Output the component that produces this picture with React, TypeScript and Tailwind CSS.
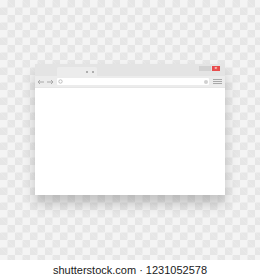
import React from 'react'

// Browser window mockup on a transparency checkerboard

export default function App() {
  return (
    <div className="w-[260px] h-[280px] flex flex-col bg-white overflow-hidden">
      <div className="h-[260px] w-full bg-[#f4f4f4] bg-[length:15px_15px] bg-[linear-gradient(45deg,#e6e6e6_25%,transparent_25%,transparent_75%,#e6e6e6_75%),linear-gradient(45deg,#e6e6e6_25%,transparent_25%,transparent_75%,#e6e6e6_75%)] bg-[position:0_0,7.5px_7.5px] pt-[64px] pl-[35px]">
        <div className="w-[190px] flex flex-col shadow-[0_9px_12px_rgba(0,0,0,0.2)]">
          {/* title bar */}
          <div className="h-[12px] bg-[#e4e4e4] flex items-end">
            <div className="ml-[22px] h-[9px] w-[40px] bg-[#ececec] rounded-t-[2px] flex items-center justify-end pr-[3px] gap-[4px]">
              <span className="w-[2px] h-[2px] bg-[#9a9a9a] rounded-full" />
              <span className="w-[2px] h-[2px] bg-[#9a9a9a] rounded-full" />
            </div>
            <div className="ml-auto mr-[5px] mb-[5px] flex items-center gap-[1px]">
              <span className="w-[12px] h-[5px] bg-[#d2d2d2]" />
              <span className="w-[8px] h-[5px] bg-[#e84c4c] flex items-center justify-center text-white text-[5px] leading-none">×</span>
            </div>
          </div>
          {/* toolbar */}
          <div className="h-[11px] bg-[#ececec] flex items-center px-[2px] gap-[2px]">
            <svg width="18" height="6" viewBox="0 0 18 6" className="shrink-0">
              <path d="M7 3H1M3 1L1 3L3 5" stroke="#a8a8a8" strokeWidth="1" fill="none" />
              <path d="M10 3H16M14 1L16 3L14 5" stroke="#a8a8a8" strokeWidth="1" fill="none" />
            </svg>
            <div className="h-[7px] flex-1 bg-white rounded-[1px] flex items-center px-[1px]">
              <svg width="5" height="5" viewBox="0 0 5 5">
                <circle cx="2.5" cy="2.5" r="1.7" stroke="#b0b0b0" strokeWidth="0.8" fill="none" />
              </svg>
              <span className="ml-auto w-[4px] h-[4px] rounded-full bg-[#d0d0d0]" />
            </div>
            <div className="w-[9px] flex flex-col gap-[1px] ml-[2px] mr-[1px]">
              <span className="h-[1px] bg-[#a8a8a8]" />
              <span className="h-[1px] bg-[#a8a8a8]" />
              <span className="h-[1px] bg-[#a8a8a8]" />
            </div>
          </div>
          {/* page */}
          <div className="h-[108px] bg-white border-t border-[#e6e6e6]" />
        </div>
      </div>
      <div className="h-[20px] flex items-center justify-center font-['Liberation_Sans',Arial,sans-serif] text-[11px] text-[#1a1a1a]">
        shutterstock.com · 1231052578
      </div>
    </div>
  )
}
